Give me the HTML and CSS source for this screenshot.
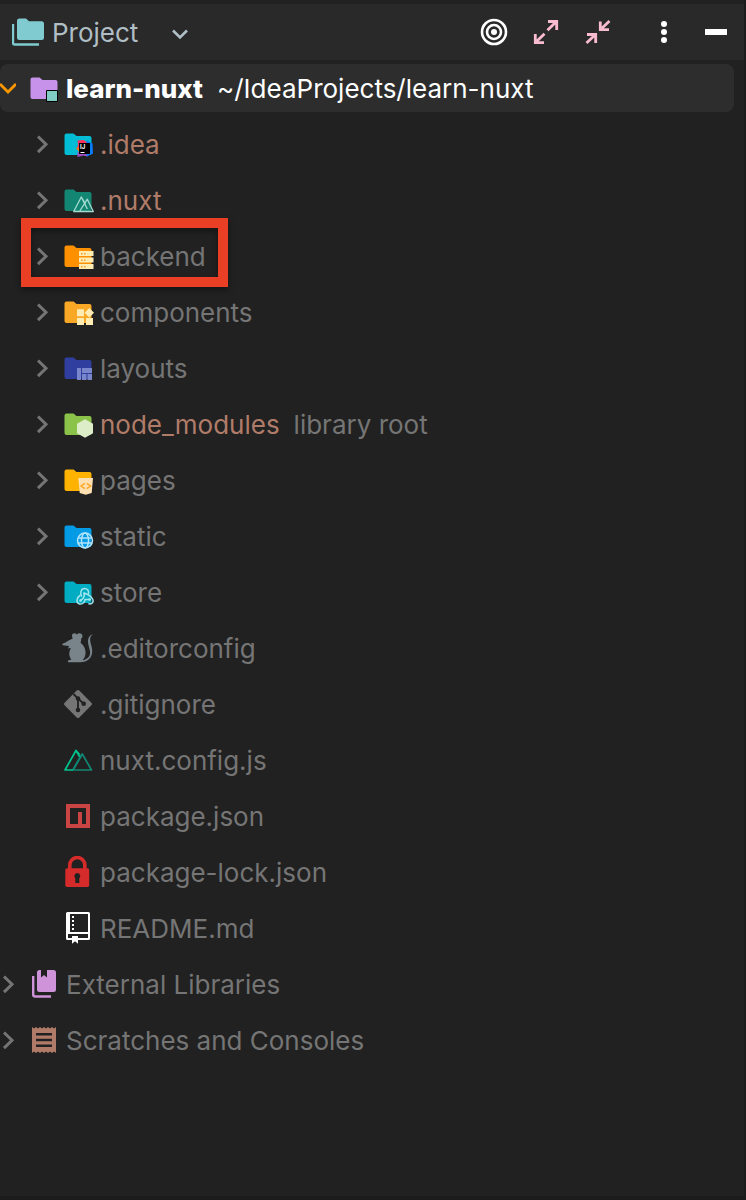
FILE: index.html
```html
<!DOCTYPE html>
<html lang="en">
<head>
    <meta charset="UTF-8">
    <meta name="viewport" content="width=device-width, initial-scale=1.0">
    <title>learn-nuxt</title>
    <link rel="stylesheet" href="styles.css">
</head>
<body>
    <!-- Shared shapes -->
    <svg class="sprite" aria-hidden="true">
        <symbol id="folder" viewBox="0 0 32 32">
            <path d="M4.500 5.500H11.500L14.500 8H27.500a2 2 0 0 1 2 2V25a2 2 0 0 1-2 2H4.500a2 2 0 0 1-2-2V7.500a2 2 0 0 1 2-2z"/>
        </symbol>
        <symbol id="right" viewBox="0 0 16 32">
            <path d="M4 8.500l8 7.800-8 7.800" fill="none" stroke="#757575" stroke-width="3"/>
        </symbol>
    </svg>

    <div class="panel">
        <header class="toolbar">
            <button class="view-switch" type="button">
                <svg class="icon" viewBox="0 0 32 32"><path d="M7.500 2.500H14l3 2.800h12.500a2.500 2.500 0 0 1 2.500 2.500V21.500a2.500 2.500 0 0 1-2.500 2.500H7.500A2.500 2.500 0 0 1 5 21.500V5a2.500 2.500 0 0 1 2.500-2.500z" fill="#80cbd0"/><path d="M1 8v19a1.500 1.500 0 0 0 1.500 1.500H27" fill="none" stroke="#80cbd0" stroke-width="2.400"/></svg>
                <span class="title">Project</span>
                <svg class="icon caret" viewBox="0 0 32 32"><path d="M9 14.500l7 7 7-7" fill="none" stroke="#b0bec5" stroke-width="2.600"/></svg>
            </button>
            <div class="actions">
                <button type="button" aria-label="Select opened file">
                    <svg class="icon" viewBox="0 0 32 32"><g fill="none" stroke="#fff" stroke-width="2.600"><circle cx="16" cy="16" r="12"/><circle cx="16" cy="16" r="7"/></g><circle cx="16" cy="16" r="3" fill="#fff"/></svg>
                </button>
                <button type="button" aria-label="Expand all">
                    <svg class="icon" viewBox="0 0 32 32"><path d="M18 5.500h8.700V14M26.500 5.500l-9 8.800M14 26.700H5.300V18M5.500 26.500l9-8.800" fill="none" stroke="#f8bbd0" stroke-width="2.800"/></svg>
                </button>
                <button type="button" aria-label="Collapse all">
                    <svg class="icon" viewBox="0 0 32 32"><path d="M18.300 5.500v8.200H27M27.500 5l-9 8.600M5 18.500h8.700V27M4.500 27l9-8.400" fill="none" stroke="#f8bbd0" stroke-width="2.800"/></svg>
                </button>
                <button class="more" type="button" aria-label="Options">
                    <svg class="icon" viewBox="0 0 32 32" fill="#fff"><circle cx="16" cy="8" r="3"/><circle cx="16" cy="16" r="3"/><circle cx="16" cy="24" r="3"/></svg>
                </button>
                <button type="button" aria-label="Hide">
                    <svg class="icon" viewBox="0 0 32 32"><path d="M5 13h22v6H5z" fill="#fff"/></svg>
                </button>
            </div>
        </header>

        <ul class="tree">
            <li>
                <div class="row selected">
                    <button class="toggle" type="button" aria-label="Collapse learn-nuxt"><svg class="chevron" viewBox="0 0 16 32"><path d="M0 12l8 8 8-8" fill="none" stroke="#ff9800" stroke-width="2.800"/></svg></button>
                    <svg class="icon" viewBox="0 0 32 32"><use href="#folder" fill="#c792ea"/><path d="M18.500 18.500h11v11h-11z" fill="#80cbc4" stroke="#000"/></svg>
                    <span class="name">learn-nuxt</span>
                    <span class="note">~/IdeaProjects/learn-nuxt</span>
                </div>
                <ul class="children">
                    <li class="row">
                        <button class="toggle" type="button" aria-label="Expand .idea"><svg class="chevron"><use href="#right"/></svg></button>
                        <svg class="icon" viewBox="0 0 32 32"><use href="#folder" fill="#00bcd4"/><path d="M15.500 12.500l6-.5 5 3-5 10-7-4 1.500-4z" fill="#fe315d"/><path d="M14 20l4-1v6z" fill="#f97a12"/><path d="M25 12.500l5.500 3 .5 10-6 3-4-3z" fill="#087cfa"/><path d="M15.500 24l8 1 2 3.500-4-1-6 1.500z" fill="#a04fc0"/><path d="M17 15h11v11H17z"/><path d="M18.500 24h4v1h-4z" fill="#fff"/><text class="ij" x="18" y="21" fill="#fff">IJ</text></svg>
                        <span class="name excluded">.idea</span>
                    </li>
                    <li class="row">
                        <button class="toggle" type="button" aria-label="Expand .nuxt"><svg class="chevron"><use href="#right"/></svg></button>
                        <svg class="icon" viewBox="0 0 32 32"><use href="#folder" fill="#128672"/><path d="M17.500 27.500H11.700L19.300 13l4.200 7M17.500 27.500l7.800-12.300 6 12.300zM19.300 13l6 12" fill="none" stroke="#a5dbd2" stroke-width="1.300" stroke-linejoin="round"/></svg>
                        <span class="name excluded">.nuxt</span>
                    </li>
                    <li class="row">
                        <div class="marked">
                            <button class="toggle" type="button" aria-label="Expand backend"><svg class="chevron"><use href="#right"/></svg></button>
                            <svg class="icon" viewBox="0 0 32 32"><use href="#folder" fill="#ff9100"/><path d="M17 11h14.500v5H17zM17 17.500h14.500v5H17zM17 24h14.500v5H17z" fill="#ffecb3"/><path d="M19 13h1.500v1.500H19zM22 13h1.500v1.500H22zM19 19.500h1.500V21H19zM22 19.500h1.500V21H22zM19 26h1.500v1.500H19zM22 26h1.500v1.500H22z" fill="#f59a20"/></svg>
                            <span class="name">backend</span>
                        </div>
                    </li>
                    <li class="row">
                        <button class="toggle" type="button" aria-label="Expand components"><svg class="chevron"><use href="#right"/></svg></button>
                        <svg class="icon" viewBox="0 0 32 32"><use href="#folder" fill="#f9a825"/><path d="M15 13.300h7v7h-7zM15 22h7v7h-7zM24 22h7v7h-7zM27.300 12l4.700 4.700-4.700 4.700-4.700-4.700z" fill="#ffecb3"/></svg>
                        <span class="name">components</span>
                    </li>
                    <li class="row">
                        <button class="toggle" type="button" aria-label="Expand layouts"><svg class="chevron"><use href="#right"/></svg></button>
                        <svg class="icon" viewBox="0 0 32 32"><use href="#folder" fill="#303f9f"/><path d="M15 16h4v12h-4zM20 16h10v5H20zM20 22h4.500v6H20zM25.500 22H30v6h-4.500z" fill="#7986cb"/></svg>
                        <span class="name">layouts</span>
                    </li>
                    <li class="row">
                        <button class="toggle" type="button" aria-label="Expand node_modules"><svg class="chevron"><use href="#right"/></svg></button>
                        <svg class="icon" viewBox="0 0 32 32"><use href="#folder" fill="#8bc34a"/><path d="M23 11.200l8 4.500v9.500l-8 4.500-8-4.500v-9.500z" fill="#dcedc8"/></svg>
                        <span class="name excluded">node_modules</span>
                        <span class="note">library root</span>
                    </li>
                    <li class="row">
                        <button class="toggle" type="button" aria-label="Expand pages"><svg class="chevron"><use href="#right"/></svg></button>
                        <svg class="icon" viewBox="0 0 32 32"><use href="#folder" fill="#ffb300"/><path d="M16.300 14H31l-1.300 15-6 1.700-6-1.700z" fill="#ffe0b2"/><path d="M22.800 19.300L19 22l3.800 2.700M24.800 19.300l3.800 2.700-3.800 2.700" fill="none" stroke="#ffa726" stroke-width="1.500"/></svg>
                        <span class="name">pages</span>
                    </li>
                    <li class="row">
                        <button class="toggle" type="button" aria-label="Expand static"><svg class="chevron"><use href="#right"/></svg></button>
                        <svg class="icon" viewBox="0 0 32 32"><use href="#folder" fill="#039be5"/><g fill="none" stroke="#b3e5fc" stroke-width="1.500"><circle cx="23" cy="20.500" r="7.500"/><ellipse cx="23" cy="20.500" rx="3.500" ry="7.500"/><path d="M16 18h14M16 23h14"/></g></svg>
                        <span class="name">static</span>
                    </li>
                    <li class="row">
                        <button class="toggle" type="button" aria-label="Expand store"><svg class="chevron"><use href="#right"/></svg></button>
                        <svg class="icon" viewBox="0 0 32 32"><use href="#folder" fill="#00acc1"/><g fill="none" stroke="#a2e6ee" stroke-width="1.500" stroke-linecap="round"><path d="M19.500 20c-1.500-2.500-.8-7.500 3-7.500 3 0 4.500 2.500 4 5"/><path d="M22.300 17.500c1-.5 6.500 2 8.300 5.500 1.500 3-.8 5.500-3.600 4.800"/><path d="M18 19.500c-3.500 2-4.300 7.500-.5 8.500 4 .8 5.500-3 5.500-4.500h5"/><path d="M22.500 17.500c0 3-1.500 5.500-4 7"/></g><g fill="#a2e6ee"><circle cx="22.300" cy="17.500" r="1.300"/><circle cx="18.500" cy="24.500" r="1.300"/><circle cx="27.500" cy="23.500" r="1.300"/></g></svg>
                        <span class="name">store</span>
                    </li>
                    <li class="row file">
                        <svg class="icon" viewBox="0 0 32 32"><path d="M10 3.500c0-2.200 3.300-3 4.800-1 1.700-2 5.700-1.300 5.700 1.500 0 1.500-.8 2.300-1.500 2.700.5 1.800-.2 3-.5 4 3 2.300 5.500 6 5 11-.2 3-1.500 5-3 6.500 5-1 8.300-4 7.500-9-.7-4-2.300-7-2-10.500.2-3.500 1.800-6 5.200-6.500-2.800 1.500-3.300 4-3 6.500.5 4 2.200 6.500 2 11-.3 6-4.500 10.500-12 10.500H6c-.5-1.500 1-2.500 3.500-2.300-2.500-3-2.800-6.500-1.500-10 .2-.8.700-1.500 1-2l-3 .5 1-2.300-4.500-.5C1 13.300-.2 12.500.3 11.800c2.500-.3 6.200-3.800 10.400-5.300-.5-.8-.7-2-.7-3z" fill="#78838a"/></svg>
                        <span class="name">.editorconfig</span>
                    </li>
                    <li class="row file">
                        <svg class="icon" viewBox="0 0 32 32"><path d="M14.700 2.600a1.800 1.800 0 0 1 2.600 0l12.100 12.100a1.800 1.800 0 0 1 0 2.600L17.300 29.400a1.800 1.800 0 0 1-2.600 0L2.600 17.300a1.800 1.800 0 0 1 0-2.600z" fill="#757575"/><path d="M11.500 6l4.500 4.500V22M16 10.500l5.500 5" fill="none" stroke="#212121" stroke-width="1.800"/><g fill="#212121"><circle cx="16" cy="10.500" r="2.200"/><circle cx="16" cy="22" r="2.300"/><circle cx="21.700" cy="15.700" r="2.300"/></g></svg>
                        <span class="name">.gitignore</span>
                    </li>
                    <li class="row file">
                        <svg class="icon" viewBox="0 0 32 32" fill="none" stroke-width="1.700" stroke-linejoin="round"><path d="M11 26l9.300-16L29.500 26z" stroke="#128672"/><path d="M17.500 10.500L14 6.500 3 26h8M14 6.500l4.500 7.500" stroke="#00c58e"/><path d="M20 10l-9 16" stroke="#108775"/></svg>
                        <span class="name">nuxt.config.js</span>
                    </li>
                    <li class="row file">
                        <svg class="icon" viewBox="0 0 32 32"><path d="M4 4h24v24H4zM8 8v16h8V12h4v12h4V8z" fill="#cb4444" fill-rule="evenodd"/></svg>
                        <span class="name">package.json</span>
                    </li>
                    <li class="row file">
                        <svg class="icon" viewBox="0 0 32 32"><path d="M7.800 14V9a7.500 7.500 0 0 1 15 0v5" fill="none" stroke="#d52b2b" stroke-width="3.600"/><path d="M5 12.300h20.500a1.700 1.700 0 0 1 1.700 1.700v15.300a1.700 1.700 0 0 1-1.700 1.700H5a1.700 1.700 0 0 1-1.700-1.700V14A1.700 1.700 0 0 1 5 12.300z" fill="#d52b2b"/><path d="M15.300 17a3 3 0 0 1 2 5.200V27h-4v-4.800a3 3 0 0 1 2-5.200z" fill="#212121"/></svg>
                        <span class="name">package-lock.json</span>
                    </li>
                    <li class="row file">
                        <svg class="icon" viewBox="0 0 32 32"><path d="M5.500 0h21A1.500 1.500 0 0 1 28 1.500v25a1.500 1.500 0 0 1-1.500 1.500H16v3.700l-3-2.500-3 2.500V28H5.500A1.500 1.500 0 0 1 4 26.500v-25A1.500 1.500 0 0 1 5.500 0zM8 2v18h18V2zM6 22v4h4v-2h6v2h10v-4z" fill="#fff" fill-rule="evenodd"/><path d="M10 4h2v2h-2zM10 8h2v2h-2zM10 12h2v2h-2zM10 16h2v2h-2z" fill="#fff"/></svg>
                        <span class="name">README.md</span>
                    </li>
                </ul>
            </li>
            <li class="row">
                <button class="toggle" type="button" aria-label="Expand External Libraries"><svg class="chevron"><use href="#right"/></svg></button>
                <svg class="icon" viewBox="0 0 32 32"><path d="M11.500 2H13v7.500l3-2.500 3 2.500V2h6.500A2.500 2.500 0 0 1 28 4.500v17a2.500 2.500 0 0 1-2.500 2.500h-14A2.500 2.500 0 0 1 9 21.500v-17A2.500 2.500 0 0 1 11.500 2z" fill="#ce93d8"/><path d="M5.200 8v18.500a2 2 0 0 0 2 2H23" fill="none" stroke="#ce93d8" stroke-width="2.400"/></svg>
                <span class="name">External Libraries</span>
            </li>
            <li class="row">
                <button class="toggle" type="button" aria-label="Expand Scratches and Consoles"><svg class="chevron"><use href="#right"/></svg></button>
                <svg class="icon" viewBox="0 0 32 32"><path d="M4 3l2 1.500L8 3l2 1.500L12 3l2 1.500L16 3l2 1.500L20 3l2 1.500L24 3l2 1.500L28 3v26l-2-1.500-2 1.500-2-1.500-2 1.500-2-1.500-2 1.500-2-1.500-2 1.500-2-1.500L8 29l-2-1.500L4 29z" fill="#b07c69"/><path d="M8 10.300h16M8 16h16M8 21.700h16" stroke="#212121" stroke-width="2.600"/></svg>
                <span class="name">Scratches and Consoles</span>
            </li>
        </ul>
    </div>
</body>
</html>
```
FILE: styles.css
```css
* {
    box-sizing: border-box;
}

body {
    margin: 0;
    background-color: #212121;
    color: #757575;
    font-family: Inter, "Liberation Sans", sans-serif;
    font-size: 26px;
    line-height: 32px;
}

button {
    display: flex;
    align-items: center;
    padding: 0;
    border: none;
    background: none;
    color: inherit;
    font: inherit;
    cursor: pointer;
}

ul {
    margin: 0;
    padding: 0;
    list-style: none;
}

.sprite {
    display: none;
}

.panel {
    min-height: 100vh;
    padding-top: 4px;
    border-right: 2px solid #1c1c1c;
    border-bottom: 4px solid #1c1c1c;
}

/* Header */
.toolbar {
    display: flex;
    justify-content: space-between;
    align-items: center;
    height: 56px;
    padding: 0 12px;
    background-color: #292929;
}

.view-switch {
    gap: 8px;
    color: #b0bec5;
}

.caret {
    margin-left: 18px;
}

.actions {
    display: flex;
    gap: 20px;
}

.more {
    margin-left: 14px;
}

/* Text sits a little below the middle of the icons */
.title,
.name,
.note {
    padding-top: 2px;
}

/* Tree */
.children {
    padding-left: 34px;
}

.row {
    display: flex;
    align-items: center;
    height: 56px;
    white-space: nowrap;
}

.selected {
    height: 48px;
    margin: 4px 10px 4px 0;
    border-radius: 8px;
    background-color: #2d2d2d;
    color: #fff;
}

.selected .name {
    font-weight: 800;
}

.toggle {
    margin-right: 12px;
}

.chevron {
    display: block;
    width: 16px;
    height: 32px;
}

.icon {
    display: block;
    flex: none;
    width: 32px;
    height: 32px;
}

.row .icon {
    margin-right: 6px;
}

.file {
    padding-left: 28px;
}

.note {
    margin-left: 14px;
}

.excluded {
    color: #b07c69;
}

.ij {
    font-size: 6px;
    font-weight: 700;
}

/* Red frame around the backend folder */
.marked {
    position: relative;
    display: flex;
    align-items: center;
    height: 56px;
}

.marked::after {
    content: "";
    position: absolute;
    top: -10px;
    right: -22px;
    bottom: -3px;
    left: -13px;
    border: 10px solid #e93f25;
    box-shadow: 0 3px 6px rgba(0, 0, 0, 0.4), inset 0 3px 6px rgba(0, 0, 0, 0.4);
    pointer-events: none;
}
```
